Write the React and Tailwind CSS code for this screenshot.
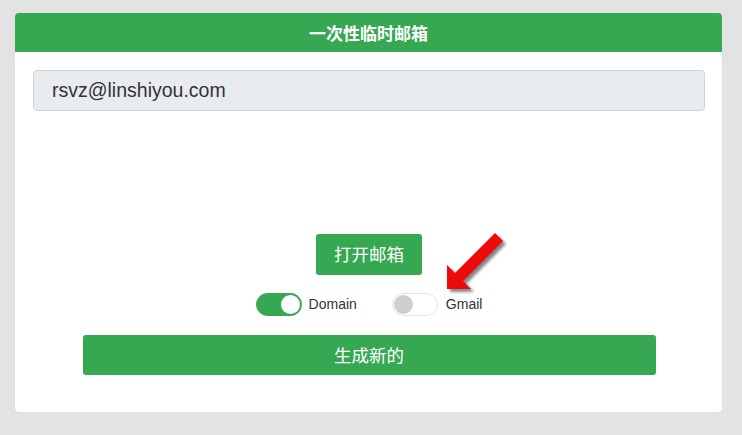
import React from "react";

function Toggle({ on }) {
  return (
    <div
      className={
        "relative w-[46px] h-[23px] rounded-full border " +
        (on ? "bg-[#36a852] border-[#36a852]" : "bg-white border-[#e3e3e3]")
      }
    >
      <div
        className={
          "absolute top-[1px] w-[19px] h-[19px] rounded-full " +
          (on ? "right-[1px] bg-white" : "left-[1px] bg-[#cfcfcf]")
        }
      />
    </div>
  );
}

export default function App() {
  return (
    <div className="relative w-[742px] h-[435px] bg-[#e3e3e3] pt-[13px] pl-[15px] overflow-hidden">
      <div className="w-[707px] h-[399px] bg-white rounded-[4px] overflow-hidden flex flex-col shadow-[0_0_1px_rgba(0,0,0,0.15)]">
        <div
          className="h-[39px] bg-[#36a852] flex items-center justify-center text-white font-bold text-[17px]"
          style={{ fontFamily: '"Noto Sans CJK SC", sans-serif' }}
        >
          一次性临时邮箱
        </div>
        <div className="flex flex-col pt-[18px] pl-[18px] pr-[17px]">
          <div
            className="h-[41px] bg-[#e9ecef] border border-[#ced4da] rounded-[4px] flex items-center pl-[18px] text-[19.5px] text-[#333]"
            style={{ fontFamily: '"Liberation Sans", Arial, sans-serif' }}
          >
            rsvz@linshiyou.com
          </div>
          <div className="flex justify-center mt-[123px]">
            <div
              className="w-[106px] h-[41px] bg-[#36a852] rounded-[3px] flex items-center justify-center text-white text-[17.5px]"
              style={{ fontFamily: '"Noto Sans CJK SC", sans-serif' }}
            >
              打开邮箱
            </div>
          </div>
          <div
            className="flex justify-center items-center mt-[18px] text-[14px] text-[#333]"
            style={{ fontFamily: '"Liberation Sans", Arial, sans-serif' }}
          >
            <Toggle on />
            <span className="ml-[7px]">Domain</span>
            <div className="ml-[35px]">
              <Toggle on={false} />
            </div>
            <span className="ml-[8px]">Gmail</span>
          </div>
          <div className="flex justify-center mt-[19px]">
            <div
              className="w-[573px] h-[40px] bg-[#36a852] rounded-[3px] flex items-center justify-center text-white text-[17.5px]"
              style={{ fontFamily: '"Noto Sans CJK SC", sans-serif' }}
            >
              生成新的
            </div>
          </div>
        </div>
      </div>
      <svg
        className="absolute left-0 top-0 pointer-events-none"
        width="742"
        height="435"
        viewBox="0 0 742 435"
      >
        <defs>
          <filter id="blur" x="-20%" y="-20%" width="140%" height="140%">
            <feGaussianBlur stdDeviation="1.5" />
          </filter>
        </defs>
        <polygon
          points="450,292 450,268 458,276 498,236 506,244 466,284 474,292"
          fill="#333"
          opacity="0.6"
          filter="url(#blur)"
        />
        <polygon
          points="447,289 447,265 455,273 495,233 503,241 463,281 471,289"
          fill="#ee0a0a"
        />
      </svg>
    </div>
  );
}
